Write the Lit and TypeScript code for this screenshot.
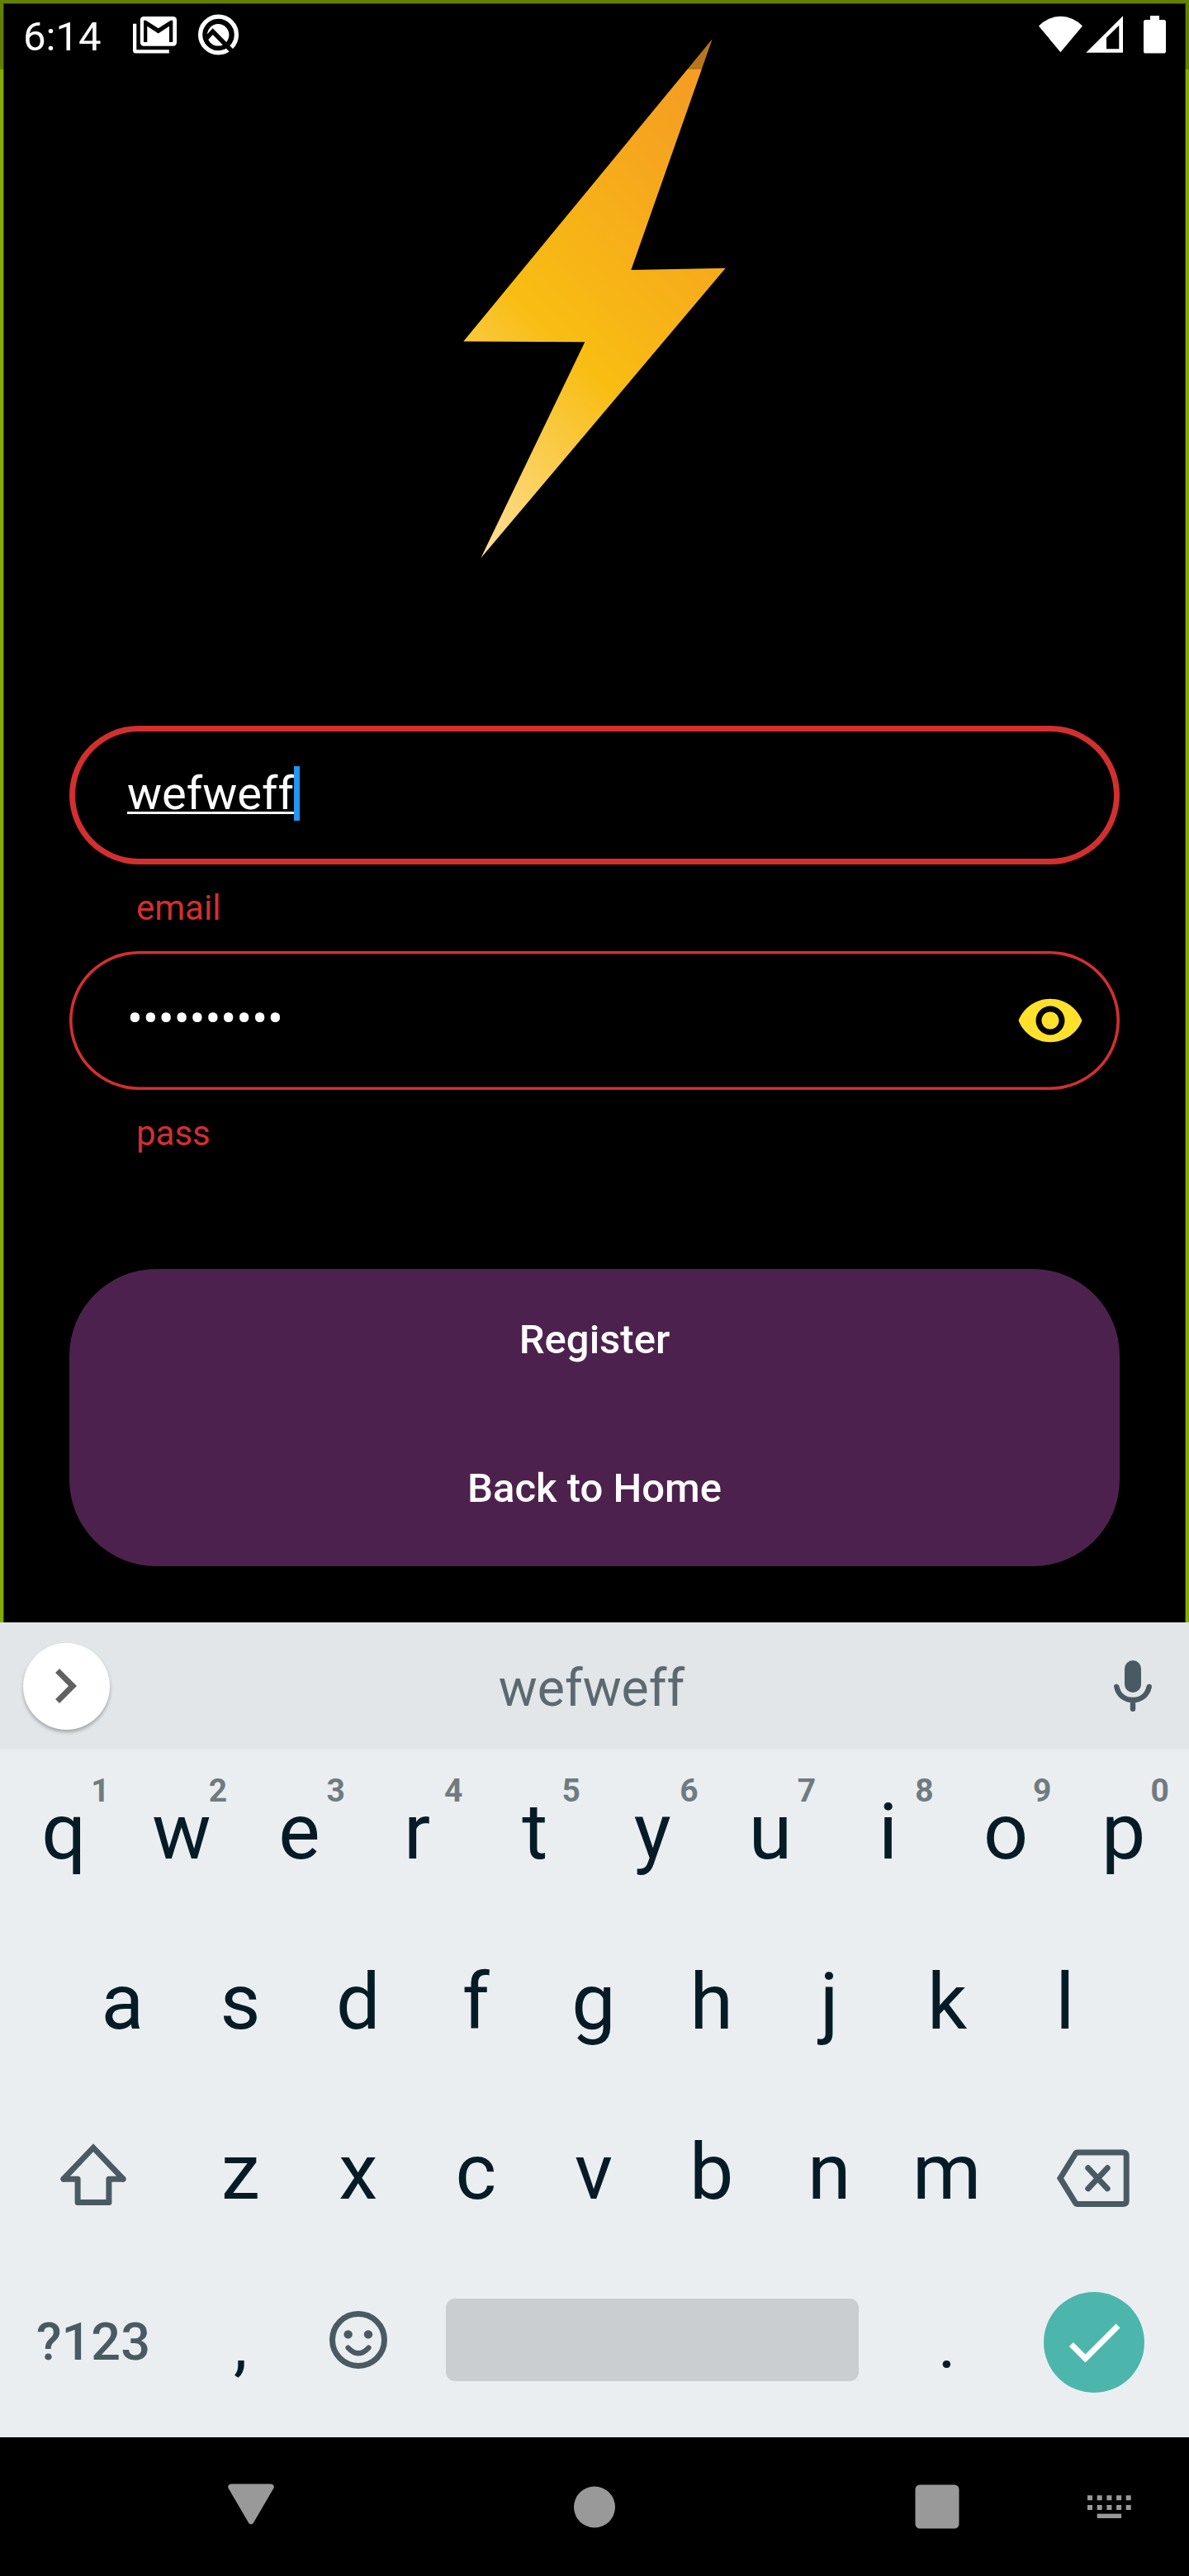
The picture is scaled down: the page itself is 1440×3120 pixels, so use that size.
import { LitElement, html, css, svg } from "lit";
import { customElement, property, state } from "lit/decorators.js";
import { classMap } from "lit/directives/class-map.js";

const ROW_ONE = "qwertyuiop".split("").map((letter, i) => ({ letter, hint: String((i + 1) % 10) }));
const ROW_TWO = "asdfghjkl".split("");
const ROW_THREE = "zxcvbnm".split("");

@customElement("status-bar")
class StatusBar extends LitElement {
  static styles = css`
    :host {
      display: flex;
      box-sizing: border-box;
      height: 84px;
      padding: 0 28px;
      justify-content: space-between;
      align-items: flex-start;
      background: rgba(0, 0, 0, 0.25);
      color: #fff;
    }
    .group {
      display: flex;
      align-items: flex-start;
    }
    .time {
      width: 133px;
      padding-top: 16px;
      font-size: 49px;
      line-height: 57px;
    }
    svg {
      display: block;
      overflow: visible;
    }
    .mail {
      margin: 20px 26px 0 0;
    }
    .quick {
      margin-top: 17px;
    }
    .wifi {
      margin: 19px 4px 0 0;
    }
    .signal {
      margin: 19px 25px 0 0;
    }
    .battery {
      margin-top: 19px;
    }
  `;

  render() {
    return html`
      <div class="group">
        <span class="time">6:14</span>
        <svg class="mail" width="53" height="45" viewBox="0 0 53 45">
          <path d="M0 8.8H4.3V40.2H43.8V44.5H3.5Q0 44.5 0 41Z" fill="#fff" />
          <rect x="8.8" y="0" width="44.2" height="35.8" rx="4.2" fill="#fff" />
          <path d="M13 4.7H15.7L30.7 14.2L45.7 4.7H48.3V31H44V11.8L30.7 20.5L17.3 11.8V31H13Z" fill="#000" />
        </svg>
        <svg class="quick" width="50" height="50" viewBox="0 0 50 50">
          <circle cx="24.5" cy="25" r="21.9" fill="none" stroke="#fff" stroke-width="5.3" />
          <circle cx="24.2" cy="25.3" r="13.2" fill="#fff" />
          <path d="M9 30.5L17.7 21.2L41.5 45.5" fill="none" stroke="#000" stroke-width="5.4" />
        </svg>
      </div>
      <div class="group">
        <svg class="wifi" width="53" height="45" viewBox="0 0 53 45">
          <path d="M0 12.5A36 36 0 0 1 53 12.5L26.4 44.3Z" fill="#fff" />
        </svg>
        <svg class="signal" width="45" height="45" viewBox="0 0 45 45">
          <path d="M0.3 44.7H45V0.3ZM25 26.7L40.3 11.7V40.2H25Z" fill="#fff" fill-rule="evenodd" />
        </svg>
        <svg class="battery" width="27" height="46" viewBox="0 0 27 46">
          <rect x="8" y="0" width="11" height="8" fill="#fff" />
          <rect x="0" y="5" width="27" height="40.6" rx="2.6" fill="#fff" />
        </svg>
      </div>
    `;
  }
}

@customElement("login-field")
class LoginField extends LitElement {
  @property() value = "";
  @property() message = "";
  @property({ type: Boolean }) focused = false;
  @property({ type: Boolean }) secret = false;

  static styles = css`
    :host {
      display: block;
    }
    .box {
      display: flex;
      box-sizing: border-box;
      height: 168px;
      padding: 0 42px 0 70px;
      align-items: center;
      justify-content: space-between;
      border-radius: 84px;
      box-shadow: inset 0 0 0 3.6px #d32f2f;
    }
    .box.focused {
      box-shadow: inset 0 0 0 7px #d32f2f;
    }
    .value {
      display: flex;
      height: 66px;
      padding-bottom: 5px;
      font-size: 56px;
      line-height: 66px;
      color: #fff;
    }
    .typed {
      text-decoration: underline;
      text-decoration-thickness: 3px;
      text-decoration-skip-ink: none;
      text-underline-offset: 3px;
    }
    .caret {
      width: 7px;
      background: #2196f3;
    }
    .message {
      padding: 28px 0 28px 81px;
      font-size: 42px;
      line-height: 49px;
      color: #d32f2f;
    }
    svg {
      display: block;
    }
  `;

  render() {
    return html`
      <div class=${classMap({ box: true, focused: this.focused })}>
        <div class="value">
          <span class=${classMap({ typed: !this.secret })}>${this.secret ? "•".repeat(this.value.length) : this.value}</span>
          ${this.focused ? html`<span class="caret"></span>` : null}
        </div>
        ${this.secret
          ? html`<svg width="84" height="84" viewBox="0 0 24 24">
              <path
                fill="#ffe12d"
                d="M12 4.5C7 4.5 2.73 7.61 1 12c1.73 4.39 6 7.5 11 7.5s9.27-3.11 11-7.5c-1.73-4.39-6-7.5-11-7.5zM12 17c-2.76 0-5-2.24-5-5s2.24-5 5-5 5 2.24 5 5-2.24 5-5 5zm0-8c-1.66 0-3 1.34-3 3s1.34 3 3 3 3-1.34 3-3-1.34-3-3-3z"
              />
            </svg>`
          : null}
      </div>
      <div class="message">${this.message}</div>
    `;
  }
}

@customElement("soft-keyboard")
class SoftKeyboard extends LitElement {
  @property() suggestion = "";

  static styles = css`
    :host {
      display: block;
      background: #ebeef1;
      color: #051c26;
    }
    svg {
      display: block;
      overflow: visible;
    }
    .strip {
      display: grid;
      grid-template-columns: 105px 1fr 105px;
      box-sizing: border-box;
      height: 154px;
      padding: 0 16px 0 28px;
      align-items: center;
      background: #e2e6e9;
    }
    .expand {
      display: flex;
      box-sizing: border-box;
      width: 105px;
      height: 105px;
      padding-right: 3px;
      align-items: center;
      justify-content: center;
      border-radius: 50%;
      background: #fff;
      box-shadow: 0 3px 4px rgba(0, 0, 0, 0.28);
    }
    .suggestion {
      padding: 5px 19px 0 0;
      text-align: center;
      font-size: 62.5px;
      line-height: 74px;
      color: #5c6970;
    }
    .mic {
      justify-self: center;
    }
    .rows {
      display: flex;
      height: 833px;
      flex-direction: column;
    }
    .row {
      display: flex;
      box-sizing: border-box;
      height: 206px;
      padding: 0 8px 7px 6px;
    }
    .row.inset {
      padding-left: 77px;
      padding-right: 79px;
    }
    .key {
      position: relative;
      display: flex;
      flex: 1 1 0;
      align-items: center;
      justify-content: center;
      font-size: 95px;
      line-height: 112px;
    }
    .key.wide {
      flex-grow: 1.5;
    }
    .key.mode {
      font-size: 63px;
      font-weight: 500;
      color: #4a5a62;
    }
    .key.mark {
      padding-top: 6px;
      font-size: 84px;
    }
    .key.space {
      flex-grow: 4;
    }
    .hint {
      position: absolute;
      top: 27px;
      right: 16px;
      font-size: 39px;
      font-weight: 700;
      line-height: 46px;
      color: #6f7b80;
    }
    .bar {
      width: 500px;
      height: 100px;
      margin-bottom: 5px;
      border-radius: 11px;
      background: #caced1;
    }
    .emoji {
      margin-bottom: 5px;
    }
    .enter {
      display: flex;
      width: 122px;
      height: 122px;
      align-items: center;
      justify-content: center;
      border-radius: 50%;
      background: #4db6ac;
    }
  `;

  render() {
    return html`
      <div class="strip">
        <div class="expand">
          <svg width="84" height="84" viewBox="0 0 24 24">
            <path fill="#616161" d="M10 6L8.59 7.41 13.17 12l-4.58 4.59L10 18l6-6z" />
          </svg>
        </div>
        <div class="suggestion">${this.suggestion}</div>
        <svg class="mic" width="46" height="62" viewBox="0 0 46 62">
          <rect x="13" y="0" width="20" height="39" rx="10" fill="#4a5a62" />
          <path
            d="M3.3 32C5.5 42 13 48 23 48S40.5 42 42.7 32M23 48V58.7"
            fill="none"
            stroke="#4a5a62"
            stroke-width="6.4"
            stroke-linecap="round"
          />
        </svg>
      </div>
      <div class="rows">
        <div class="row">
          ${ROW_ONE.map((k) => html`<div class="key">${k.letter}<span class="hint">${k.hint}</span></div>`)}
        </div>
        <div class="row inset">${ROW_TWO.map((k) => html`<div class="key">${k}</div>`)}</div>
        <div class="row">
          <div class="key wide">
            <svg width="84" height="84" viewBox="0 0 84 84" fill="none" stroke="#4a5a62" stroke-width="7">
              <path d="M6 50L42 12.2L78 50" stroke-linecap="round" />
              <path d="M6 50.3H23.1V78.5H60.9V50.3H78" stroke-linejoin="round" stroke-linecap="round" />
            </svg>
          </div>
          ${ROW_THREE.map((k) => html`<div class="key">${k}</div>`)}
          <div class="key wide">
            <svg width="100" height="100" viewBox="0 0 100 100" fill="none" stroke="#4a5a62" stroke-width="7">
              <path d="M30 26H85Q89.2 26 89.2 30V84.5Q89.2 88.5 85 88.5H30Q28.3 88.5 27.4 87L9 57.2L27.4 27.5Q28.3 26 30 26Z" />
              <path d="M42.8 44.8L66.2 69.8M66.2 44.8L42.8 69.8" stroke-linecap="round" />
            </svg>
          </div>
        </div>
        <div class="row">
          <div class="key wide mode">?123</div>
          <div class="key mark">,</div>
          <div class="key">
            <svg class="emoji" width="70" height="70" viewBox="0 0 70 70" fill="none" stroke="#4a5a62">
              <circle cx="35" cy="35" r="31.5" stroke-width="7" />
              <circle cx="22.6" cy="28.4" r="5.2" fill="#4a5a62" stroke="none" />
              <circle cx="47" cy="28.4" r="5.2" fill="#4a5a62" stroke="none" />
              <path d="M22.6 44.6Q35 58 47.4 44.6" stroke-width="6.4" stroke-linecap="round" />
            </svg>
          </div>
          <div class="key space"><div class="bar"></div></div>
          <div class="key mark">.</div>
          <div class="key wide">
            <div class="enter">
              <svg width="84" height="84" viewBox="0 0 24 24">
                <path fill="#fff" d="M9 16.17L4.83 12l-1.42 1.41L9 19 21 7l-1.41-1.41z" />
              </svg>
            </div>
          </div>
        </div>
      </div>
    `;
  }
}

@customElement("nav-bar")
class NavBar extends LitElement {
  static styles = css`
    :host {
      display: flex;
      box-sizing: border-box;
      height: 168px;
      padding: 0 0 0 276px;
      align-items: center;
      background: #000;
    }
    svg {
      display: block;
      flex: none;
      fill: #999;
    }
    .back {
      margin: 0 363px 6px 0;
    }
    .home {
      margin-right: 363px;
    }
    .recent {
      margin-right: 155px;
    }
  `;

  render() {
    const columns = [0, 11.7, 23.4, 35.1, 46.7];
    return html`
      <svg class="back" width="56" height="50" viewBox="0 0 56 50">
        <path d="M4 0.5H52Q57 1.5 55.5 5.5L31 47.5Q28 51.5 25 47.5L0.5 5.5Q-1 1.5 4 0.5Z" />
      </svg>
      <svg class="home" width="50" height="51" viewBox="0 0 50 51"><circle cx="25" cy="25.5" r="25" /></svg>
      <svg class="recent" width="54" height="54" viewBox="0 0 54 54">
        <rect x="0.5" y="0.5" width="53" height="53" rx="5.5" />
      </svg>
      <svg width="54" height="28" viewBox="0 0 54 28">
        ${columns.map(
          (x) => svg`<rect x=${x} y="0.3" width="6" height="6" /><rect x=${x} y="12" width="6" height="6" />`,
        )}
        <rect x="11.7" y="22.6" width="29.4" height="5.4" />
      </svg>
    `;
  }
}

@customElement("app-root")
class AppRoot extends LitElement {
  @state() private email = "wefweff";
  @state() private password = "wefweff123";

  static styles = css`
    :host {
      display: block;
      width: 1440px;
      height: 3120px;
      overflow: hidden;
      background: #000;
      font-family: Roboto, "Liberation Sans", sans-serif;
    }
    .screen {
      position: relative;
      display: flex;
      box-sizing: border-box;
      height: 1965px;
      flex-direction: column;
      padding: 0 80px;
      border: 4px solid #84ac00;
      border-bottom: 0;
      box-shadow: inset 1px 1px 0 #2e3c00, inset -1px 0 0 #2e3c00;
    }
    .status {
      position: absolute;
      top: -4px;
      left: -4px;
      width: 1440px;
    }
    .bolt {
      display: block;
      width: 360px;
      height: 650px;
      margin: 36px auto 189px;
    }
    .form {
      height: 624px;
    }
    .actions {
      display: flex;
      height: 360.5px;
      margin-top: 33.5px;
      flex-direction: column;
      border-radius: 105px;
      background: #4d214d;
    }
    .action {
      display: flex;
      flex: 1;
      padding-bottom: 9px;
      align-items: center;
      justify-content: center;
      font-size: 49px;
      font-weight: 500;
      line-height: 57px;
      color: #fff;
    }
  `;

  render() {
    return html`
      <div class="screen">
        <svg class="bolt" viewBox="0 0 360 650">
          <defs>
            <linearGradient id="glow" gradientUnits="userSpaceOnUse" x1="42" y1="636" x2="449" y2="229">
              <stop offset="0" stop-color="#fddf98" />
              <stop offset="0.445" stop-color="#f8bd12" />
              <stop offset="1" stop-color="#f59e22" />
            </linearGradient>
          </defs>
          <path fill="url(#glow)" d="M322.7 7.3L224.3 287L338.7 284.8L42.3 636L168.3 374.2L21.3 373.4Z" />
        </svg>
        <div class="form">
          <login-field .value=${this.email} message="email" focused></login-field>
          <login-field .value=${this.password} message="pass" secret></login-field>
        </div>
        <div class="actions">
          <div class="action">Register</div>
          <div class="action">Back to Home</div>
        </div>
        <status-bar class="status"></status-bar>
      </div>
      <soft-keyboard .suggestion=${this.email}></soft-keyboard>
      <nav-bar></nav-bar>
    `;
  }
}
